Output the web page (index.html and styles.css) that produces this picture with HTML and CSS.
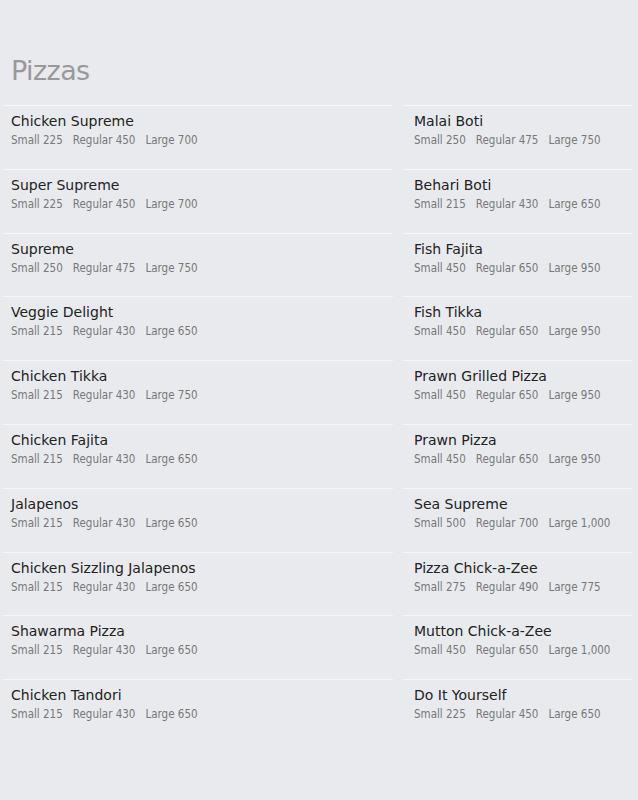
FILE: index.html
```html
<!DOCTYPE html>
<html>
<head>
<meta charset="utf-8">
<link rel="stylesheet" href="styles.css">
</head>
<body>
<div class="page">
  <h1 class="title">Pizzas</h1>
  <div class="menu">
    <div class="col col-left">
      <div class="item"><div class="name">Chicken Supreme</div><div class="prices"><span>Small 225</span><span>Regular 450</span><span>Large 700</span></div></div>
      <div class="item"><div class="name">Super Supreme</div><div class="prices"><span>Small 225</span><span>Regular 450</span><span>Large 700</span></div></div>
      <div class="item"><div class="name">Supreme</div><div class="prices"><span>Small 250</span><span>Regular 475</span><span>Large 750</span></div></div>
      <div class="item"><div class="name">Veggie Delight</div><div class="prices"><span>Small 215</span><span>Regular 430</span><span>Large 650</span></div></div>
      <div class="item"><div class="name">Chicken Tikka</div><div class="prices"><span>Small 215</span><span>Regular 430</span><span>Large 750</span></div></div>
      <div class="item"><div class="name">Chicken Fajita</div><div class="prices"><span>Small 215</span><span>Regular 430</span><span>Large 650</span></div></div>
      <div class="item"><div class="name">Jalapenos</div><div class="prices"><span>Small 215</span><span>Regular 430</span><span>Large 650</span></div></div>
      <div class="item"><div class="name">Chicken Sizzling Jalapenos</div><div class="prices"><span>Small 215</span><span>Regular 430</span><span>Large 650</span></div></div>
      <div class="item"><div class="name">Shawarma Pizza</div><div class="prices"><span>Small 215</span><span>Regular 430</span><span>Large 650</span></div></div>
      <div class="item"><div class="name">Chicken Tandori</div><div class="prices"><span>Small 215</span><span>Regular 430</span><span>Large 650</span></div></div>
    </div>
    <div class="col col-right">
      <div class="item"><div class="name">Malai Boti</div><div class="prices"><span>Small 250</span><span>Regular 475</span><span>Large 750</span></div></div>
      <div class="item"><div class="name">Behari Boti</div><div class="prices"><span>Small 215</span><span>Regular 430</span><span>Large 650</span></div></div>
      <div class="item"><div class="name">Fish Fajita</div><div class="prices"><span>Small 450</span><span>Regular 650</span><span>Large 950</span></div></div>
      <div class="item"><div class="name">Fish Tikka</div><div class="prices"><span>Small 450</span><span>Regular 650</span><span>Large 950</span></div></div>
      <div class="item"><div class="name">Prawn Grilled Pizza</div><div class="prices"><span>Small 450</span><span>Regular 650</span><span>Large 950</span></div></div>
      <div class="item"><div class="name">Prawn Pizza</div><div class="prices"><span>Small 450</span><span>Regular 650</span><span>Large 950</span></div></div>
      <div class="item"><div class="name">Sea Supreme</div><div class="prices"><span>Small 500</span><span>Regular 700</span><span>Large 1,000</span></div></div>
      <div class="item"><div class="name">Pizza Chick-a-Zee</div><div class="prices"><span>Small 275</span><span>Regular 490</span><span>Large 775</span></div></div>
      <div class="item"><div class="name">Mutton Chick-a-Zee</div><div class="prices"><span>Small 450</span><span>Regular 650</span><span>Large 1,000</span></div></div>
      <div class="item"><div class="name">Do It Yourself</div><div class="prices"><span>Small 225</span><span>Regular 450</span><span>Large 650</span></div></div>
    </div>
  </div>
</div>
</body>
</html>
```

FILE: styles.css
```css
html, body {
  margin: 0;
  padding: 0;
  background: #e9eaee;
}
body {
  font-family: "DejaVu Sans", Verdana, sans-serif;
  color: #222;
  height: 800px;
}
.page {
  padding: 52px 6px 0 3px;
}
.title {
  margin: 0 0 15px 8px;
  font-weight: normal;
  font-size: 27px;
  line-height: 38px;
  letter-spacing: -0.6px;
  color: #999;
}
.menu {
  display: flex;
  gap: 10px;
}
.col-left {
  width: 390px;
}
.col-right {
  flex: 1;
}
.item {
  border-top: 1px solid #f7f7f9;
  height: 63.8px;
  padding: 6px 0 0 8px;
  box-sizing: border-box;
}
.col-right .item {
  padding-left: 11px;
}
.name {
  font-size: 14px;
  line-height: 18px;
  color: #222;
}
.prices {
  display: flex;
  gap: 10px;
  margin-top: 2px;
  font-family: "DejaVu Sans Condensed", "DejaVu Sans", sans-serif;
  font-stretch: condensed;
  font-size: 11.5px;
  line-height: 16px;
  color: #777;
}
```
